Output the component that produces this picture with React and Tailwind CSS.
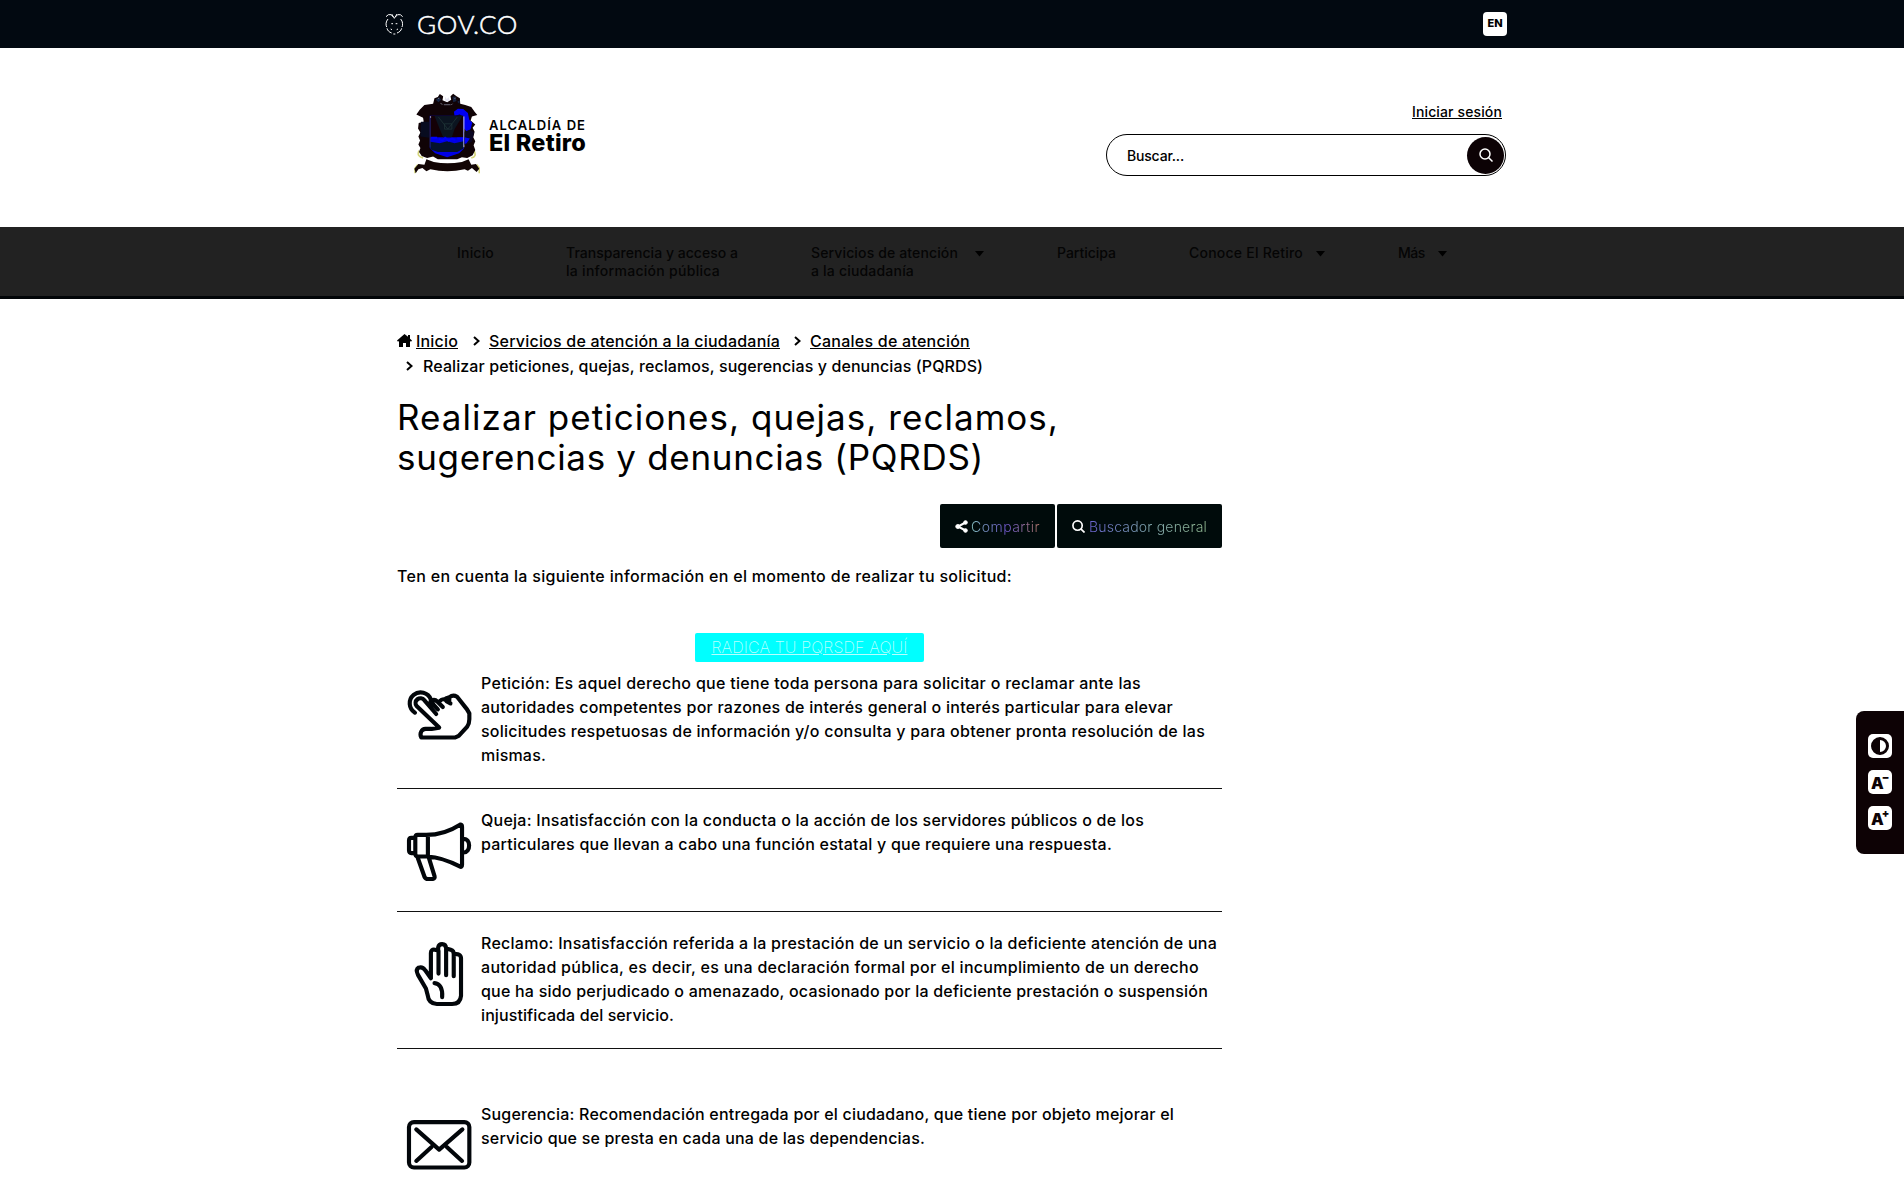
import React, { useLayoutEffect, useRef } from "react";

// Single line of text whose tracking is adjusted so it fills the width w.
function Line({ w, className = "", children }) {
  const ref = useRef(null);
  useLayoutEffect(() => {
    const el = ref.current;
    el.style.letterSpacing = "0px";
    const natural = el.getBoundingClientRect().width;
    el.style.letterSpacing = `${(w - natural) / el.textContent.length}px`;
  }, [w]);
  return (
    <span ref={ref} className={`inline-block whitespace-pre ${className}`}>
      {children}
    </span>
  );
}

const Caret = () => (
  <svg viewBox="0 0 9 6" className="mt-[7px] h-[6px] w-[9px]" fill="#000">
    <path d="M0 0h9L4.5 5.5z" />
  </svg>
);

const Chevron = () => (
  <svg viewBox="0 0 7 10" className="h-[10px] w-[7px] shrink-0" fill="none" stroke="#000" strokeWidth="2">
    <path d="M1 1l4.500 4-4.500 4" />
  </svg>
);

const SearchIcon = ({ className, sw = 2 }) => (
  <svg viewBox="0 0 14 14" className={className} fill="none" stroke="#fff" strokeWidth={sw}>
    <circle cx="6" cy="6" r="5" />
    <path d="M9.500 9.500l4 4" />
  </svg>
);

function GovIcon() {
  return (
    <svg viewBox="44 38 54 68" className="h-[22.700px] w-[18px]" fill="none" stroke="#fff">
      <path d="M47 49L54 43H62L69 50M97 49L90 43H82L75 50M64 41L72 54L80 41" strokeWidth="3" />
      <path d="M53 56C46 64 46 74 49 80M50 84C52 91 56 95 64 98M91 56C98 64 98 74 95 80M94 84C92 91 88 95 80 98" strokeWidth="3" />
      <path d="M63 70h5M76 70h5M61 86l4 2M79 88l4-2M69 101h6" strokeWidth="3" />
    </svg>
  );
}

function Crest() {
  return (
    <svg viewBox="130 280 200 242" className="h-[81px] w-[67px]">
      <path
        d="M148 452Q140 470 160 474M312 452Q322 470 304 474M136 520V505L144 494M328 520V504L320 494"
        fill="none"
        stroke="#d6d67c"
        strokeWidth="5"
      />
      <path
        d="M190 312L194 296L204 292L210 283L220 290L218 302L232 308L244 300L242 290L250 282L260 290L270 296L271 312L286 316L304 322L314 336L322 346L306 350L302 362L316 374L308 384L314 396L310 412L316 424L311 436L316 450L308 466L292 474L276 472L262 478H204L190 470L172 474L156 468L148 456L152 444L146 434L151 422L146 410L152 398L145 386L147 370L162 366L160 354L140 344L150 330L164 316Z"
        fill="#100306"
      />
      <path d="M198 300l10-8 6 8-8 8zM248 292l8-2 4 14-10 4zM262 306l8-4-2 10z" fill="#162440" />
      <path d="M226 291l5 8 5-6 3 8-7 5-7-5z" fill="#e4e4f0" />
      <path d="M212 311l6 3M222 315h20M248 312l-4 4M205 295l3 3M257 294l-3 4" stroke="#7d7c8c" strokeWidth="2.500" />
      <path d="M154 366h24v48l-26-4z" fill="#080c20" />
      <path d="M252 336L264 327L280 328L294 340L298 360L307 368L302 388L290 396L281 384V352L270 344L254 348Z" fill="#0000f4" />
      <path d="M180 348H282V446L268 460L232 472L196 460L180 444Z" fill="#0000e6" />
      <path d="M182 348H280V412H182Z" fill="#140006" />
      <path d="M194 348H278L254 388L246 412H220L210 388Z" fill="#0b1420" />
      <path d="M206 352l28 36 28-36M224 372h22v16h-22z" fill="none" stroke="#22393a" strokeWidth="2" />
      <path d="M182 426L210 430L232 424L254 430L281 424V446L262 456H204L182 448Z" fill="#04122c" />
      <path d="M184 414h18M208 416l10 6 8-8 10 8 10-6 10 4M262 416h18" fill="none" stroke="#0000ff" strokeWidth="6" />
      <path d="M282 350v92" stroke="#eee" strokeWidth="2.500" />
      <path d="M181 350v92" stroke="#343c3c" strokeWidth="2" />
      <path d="M284 396L300 390L312 398L306 426L284 436Z" fill="#0b0722" />
      <path d="M284 412l16 4-10 14-6 2z" fill="#0000ff" />
      <path d="M181 350h3v3h-3z" fill="#fff" />
      <path
        d="M170 478L192 486Q232 494 276 486L296 478L304 494L318 492L328 506L320 516L306 504L294 512L284 508Q232 520 182 508L170 514L158 504L146 508L138 520L134 506L146 492L164 494Z"
        fill="#120504"
      />
    </svg>
  );
}

const iconProps = {
  fill: "none",
  stroke: "#02060a",
  strokeWidth: 12.5,
  strokeLinecap: "round",
  strokeLinejoin: "round",
};

const TapIcon = () => (
  <svg viewBox="50 85 193 153" className="h-[51px] w-16 overflow-visible" {...iconProps}>
    <path d="M74 156A33 33 0 1 1 122 116" />
    <path d="M138 160L102 118A14 14 0 0 0 79 136L147 201L124 205H106C94 206 87 217 93 231H194L206 226L231 199Q238 190 238 176V158L231 146L201 108Q189 101 178 109L177 125M143 146L121 122Q132 113 142 123L158 139M148 122Q160 109 170 122L181 128M167 113L178 109" />
  </svg>
);

const MegaphoneIcon = () => (
  <svg viewBox="50 486 193 175" className="h-[58px] w-16 overflow-visible" {...iconProps}>
    <path d="M82 522H108C145 522 182 509 210 491Q216 490 216 497V612Q216 621 209 617C180 602 146 589 112 587H82Q75 586 75 579V530Q75 522 82 522zM113 523V586M72 531H63Q56 531 56 539V568Q56 576 64 577H73M219 534C243 530 244 577 219 575M82 590L103 649Q106 655 113 655H128Q135 654 133 646L116 591" />
  </svg>
);

const HandIcon = () => (
  <svg viewBox="74 65 145 194" className="ml-2 h-[64.500px] w-12 overflow-visible" {...iconProps}>
    <path d="M122 174V98Q122 86 134 88L144 90V81Q146 71 156 71Q167 71 168 84L182 88Q192 91 191 102Q213 98 213 114V227Q211 252 186 252H140Q115 251 112 224L107 205L83 164Q75 148 85 142Q97 138 105 150L122 174M145 91V160M168 86V165M191 102V168M133 189C149 190 158 205 156 231" />
  </svg>
);

const MailIcon = () => (
  <svg viewBox="50 600 193 150" className="h-[50px] w-16 overflow-visible" {...iconProps}>
    <rect x="56" y="606" width="182" height="137" rx="15" />
    <path d="M78 628L147 689L217 628M78 723L124 681M216 723L170 681" />
  </svg>
);

const navItems = [
  { x: "w-[109px]", lines: [["Inicio", 37]] },
  { x: "w-[245px]", lines: [["Transparencia y acceso a", 172], ["la información pública", 154]] },
  { x: "w-[246px]", lines: [["Servicios de atención", 147], ["a la ciudadanía", 103]], caret: "ml-[17px]" },
  { x: "w-[132px]", lines: [["Participa", 59]] },
  { x: "w-[209px]", lines: [["Conoce El Retiro", 114]], caret: "ml-[13px]" },
  { x: "w-[80px]", lines: [["Más", 27]], caret: "ml-[13px]" },
];

const entries = [
  {
    Icon: TapIcon,
    box: "h-[117px]",
    iconTop: "pt-[17px]",
    rule: true,
    lines: [
      ["Petición: Es aquel derecho que tiene toda persona para solicitar o reclamar ante las", 660],
      ["autoridades competentes por razones de interés general o interés particular para elevar", 692],
      ["solicitudes respetuosas de información y/o consulta y para obtener pronta resolución de las", 724],
      ["mismas.", 65],
    ],
  },
  {
    Icon: MegaphoneIcon,
    box: "h-[123px] pt-[20px]",
    iconTop: "pt-[14px]",
    rule: true,
    lines: [
      ["Queja: Insatisfacción con la conducta o la acción de los servidores públicos o de los", 663],
      ["particulares que llevan a cabo una función estatal y que requiere una respuesta.", 631],
    ],
  },
  {
    Icon: HandIcon,
    box: "h-[137px] pt-[20px]",
    iconTop: "pt-[10px]",
    rule: true,
    lines: [
      ["Reclamo: Insatisfacción referida a la prestación de un servicio o la deficiente atención de una", 736],
      ["autoridad pública, es decir, es una declaración formal por el incumplimiento de un derecho", 718],
      ["que ha sido perjudicado o amenazado, ocasionado por la deficiente prestación o suspensión", 727],
      ["injustificada del servicio.", 193],
    ],
  },
  {
    Icon: MailIcon,
    box: "h-[136px] pt-[54px]",
    iconTop: "pt-[17px]",
    lines: [
      ["Sugerencia: Recomendación entregada por el ciudadano, que tiene por objeto mejorar el", 693],
      ["servicio que se presta en cada una de las dependencias.", 444],
    ],
  },
];

export default function App() {
  return (
    <div className="relative h-[1185px] w-[1904px] overflow-hidden bg-white font-[Inter,sans-serif] text-[16px] font-medium text-black">
      <div className="h-12 bg-[#020911]">
        <div className="ml-[385px] flex h-12 w-[1122px] items-center">
          <GovIcon />
          <Line w={101} className="ml-[14px] font-[Lato,sans-serif] text-[26px] leading-[46px] font-light text-white [-webkit-text-stroke:0.5px_white]">GOV.CO</Line>
          <div className="ml-auto flex h-6 w-6 items-center justify-center rounded-[4px] bg-white text-[11px] font-extrabold">
            <Line w={15} className="-mt-px">EN</Line>
          </div>
        </div>
      </div>

      <header className="flex h-[179px] pl-[413px]">
        <div className="pt-[45px]">
          <Crest />
        </div>
        <div className="ml-[9px] flex w-[200px] flex-col pt-[70px]">
          <Line w={97} className="self-start text-[13px] leading-[14px] font-semibold">ALCALDÍA DE</Line>
          <Line w={97} className="self-start text-[23.500px] leading-[22px] font-extrabold">El Retiro</Line>
        </div>
        <div className="ml-[417px] flex w-[400px] flex-col pt-[54px]">
          <a className="mr-1 self-end text-[14px] leading-[20px] underline underline-offset-1">
            <Line w={90} className="underline">Iniciar sesión</Line>
          </a>
          <div className="mt-3 flex h-[42px] items-center justify-between rounded-full border border-black pr-[1px] pl-5">
            <Line w={57} className="text-[14px]">Buscar...</Line>
            <div className="flex h-[37px] w-[37px] items-center justify-center rounded-full bg-[#0c0205]">
              <SearchIcon className="h-[14px] w-[14px]" sw={1.5} />
            </div>
          </div>
        </div>
      </header>

      <nav className="flex h-[72px] border-b-[3px] border-[#020508] bg-[#222222] pt-[17px] pl-[457px] text-[14px] leading-[18px] text-[#050505]">
        {navItems.map((it) => (
          <div key={it.lines[0][0]} className={`flex shrink-0 items-start ${it.x}`}>
            <div className="flex flex-col items-start">
              {it.lines.map(([t, w]) => (
                <Line key={t} w={w}>{t}</Line>
              ))}
            </div>
            {it.caret && (
              <span className={it.caret}>
                <Caret />
              </span>
            )}
          </div>
        ))}
      </nav>

      <main className="ml-[397px] w-[825px]">
        <div className="mt-[29px] flex h-[25px] items-center">
          <svg viewBox="0 0 15 13" className="h-[13px] w-[15px]" fill="#000">
            <path d="M7.500 0L0 6.500l1 1.300 1-.8V13h4V9h3v4h4V7l1 .8 1-1.300-2-1.800V1h-2v1.800z" />
          </svg>
          <Line w={42} className="ml-1 underline underline-offset-1">Inicio</Line>
          <span className="mr-[9px] ml-[15px]"><Chevron /></span>
          <Line w={291} className="underline underline-offset-1">Servicios de atención a la ciudadanía</Line>
          <span className="mr-[9px] ml-[14px]"><Chevron /></span>
          <Line w={160} className="underline underline-offset-1">Canales de atención</Line>
        </div>
        <div className="flex h-[25px] items-center pl-[9px]">
          <Chevron />
          <Line w={560} className="ml-[10px]">Realizar peticiones, quejas, reclamos, sugerencias y denuncias (PQRDS)</Line>
        </div>

        <h1 className="mt-[19px] flex flex-col items-start text-[35px] leading-[40px] font-normal">
          <Line w={662}>Realizar peticiones, quejas, reclamos,</Line>
          <Line w={587}>sugerencias y denuncias (PQRDS)</Line>
        </h1>

        <div className="mt-[27px] flex h-11 justify-end gap-[2px] text-[14px] font-light">
          <button className="flex w-[115px] items-center rounded-[2px] bg-[#000b0b] pl-[15px]">
            <svg viewBox="0 0 13 13" className="h-[13px] w-[13px]" fill="#fff" stroke="#fff">
              <path d="M10.500 2.500L3 6.500l7.500 4" fill="none" strokeWidth="2" />
              <circle cx="10.500" cy="2.500" r="1.800" />
              <circle cx="2.800" cy="6.500" r="2" />
              <circle cx="10.500" cy="10.500" r="1.800" />
            </svg>
            <Line w={69} className="ml-[3px] bg-gradient-to-r from-[#7fb8b8] via-[#7058d0] to-[#a87060] bg-clip-text text-transparent">Compartir</Line>
          </button>
          <button className="flex w-[165px] items-center rounded-[2px] bg-[#000b0b] pl-[15px]">
            <SearchIcon className="h-[13px] w-[13px]" sw={1.8} />
            <Line w={118} className="ml-[4px] bg-gradient-to-r from-[#6a62d0] via-[#82a8b0] to-[#90b890] bg-clip-text text-transparent">Buscador general</Line>
          </button>
        </div>

        <p className="mt-[16px] leading-[24px]">
          <Line w={615}>Ten en cuenta la siguiente información en el momento de realizar tu solicitud:</Line>
        </p>

        <div className="mt-[45px] flex justify-center">
          <a className="flex h-[29px] w-[229px] items-center justify-center rounded-[2px] bg-[#00ffff] pb-[2px] font-extralight text-[#b8ffff]">
            <Line w={196} className="underline underline-offset-1">RADICA TU PQRSDF AQUÍ</Line>
          </a>
        </div>

        <div className="mt-[10px] leading-[24px]">
          {entries.map(({ Icon, lines, box, rule, iconTop }) => (
            <section key={lines[0][0]} className={`flex ${box} ${rule ? "border-b border-[#111]" : ""}`}>
              <div className={`w-[84px] shrink-0 pl-[10px] ${iconTop}`}>
                <Icon />
              </div>
              <div className="-mt-px flex flex-col items-start">
                {lines.map(([t, w]) => (
                  <Line key={t} w={w}>{t}</Line>
                ))}
              </div>
            </section>
          ))}
        </div>
      </main>

      <aside className="absolute top-[711px] right-0 flex h-[143px] w-12 flex-col gap-3 rounded-l-lg bg-[#0d0205] pt-[23px] pl-3">
        <div className="flex h-6 w-6 items-center justify-center rounded-[5px] bg-white">
          <svg viewBox="0 0 18 18" className="h-[18px] w-[18px]">
            <circle cx="9" cy="9" r="7.500" fill="#fff" stroke="#0d0205" strokeWidth="3" />
            <path d="M9 1a8 8 0 0 0 0 16z" fill="#0d0205" />
          </svg>
        </div>
        {["−", "+"].map((s) => (
          <div key={s} className="flex h-6 w-6 items-start rounded-[5px] bg-white pl-[3px] text-[#0d0205]">
            <span className="mt-[5px] text-[16px] leading-[16px] font-black">A</span>
            <span className="-ml-[2px] mt-[2px] text-[11px] leading-[11px] font-black">{s}</span>
          </div>
        ))}
      </aside>
    </div>
  );
}
